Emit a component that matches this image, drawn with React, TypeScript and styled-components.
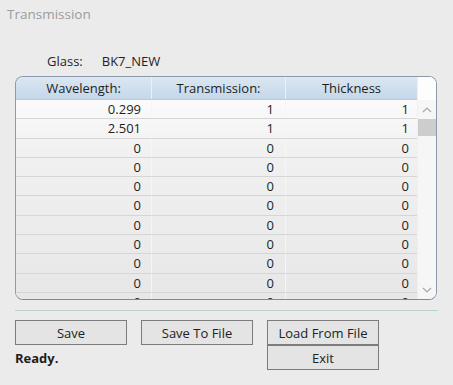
import styled, { createGlobalStyle } from "styled-components";

const GlobalStyle = createGlobalStyle`
  html, body {
    margin: 0;
    padding: 0;
    background: #ebebeb;
  }
  body {
    font-family: "Open Sans", "Noto Sans", sans-serif;
    color: #1e1e1e;
  }
`;

const Window = styled.div`
  width: 453px;
  height: 385px;
  box-sizing: border-box;
  padding: 5px 15px 0 15px;
  background: #ebebeb;
  display: flex;
  flex-direction: column;
`;

const Title = styled.div`
  margin-left: -8px;
  font-size: 13.5px;
  line-height: 18px;
  color: #9c9c9c;
`;

const GlassRow = styled.div`
  display: flex;
  gap: 19px;
  margin: 29px 0 0 32px;
  font-size: 13px;
  line-height: 18px;
`;

const Frame = styled.div`
  margin-top: 6px;
  width: 422px;
  height: 224px;
  box-sizing: border-box;
  border: 1px solid #8c99a8;
  border-bottom-color: #7f8a98;
  border-radius: 8px;
  overflow: hidden;
  display: flex;
  background: #f7f7f7;
`;

const Grid = styled.div`
  flex: 1;
  display: flex;
  flex-direction: column;
  overflow: hidden;
`;

const HeaderRow = styled.div`
  display: grid;
  grid-template-columns: 135px 134px 1fr;
  height: 22px;
  flex-shrink: 0;
  background: linear-gradient(#dbe7f2, #c4d7e9);
  border-bottom: 1px solid #b8c9da;
`;

const HeadCell = styled.div<{ $first?: boolean }>`
  font-size: 13px;
  line-height: 22px;
  text-align: center;
  border-left: ${(p) => (p.$first ? "none" : "1px solid #eaf1f8")};
`;

const Body = styled.div`
  flex: 1;
  overflow: hidden;
  background: linear-gradient(#fbfbfb, #f1f1f1 25%, #e7e7e7);
`;

const Row = styled.div`
  display: grid;
  grid-template-columns: 135px 134px 1fr;
  height: 19.3px;
  box-sizing: border-box;
  border-bottom: 1px solid #d6d6d6;
`;

const Cell = styled.div<{ $pad: number }>`
  font-size: 13px;
  line-height: 18px;
  text-align: right;
  padding-right: ${(p) => p.$pad}px;
  border-left: 1px solid #f6f6f6;
  &:first-child {
    border-left: none;
  }
`;

const Scroll = styled.div`
  width: 18px;
  display: flex;
  flex-direction: column;
  background: #f6f6f6;
  border-left: 1px solid #f0f0f0;
`;

const ScrollCorner = styled.div`
  height: 23px;
  background: #fdfdfd;
`;

const Arrow = styled.div`
  height: 19px;
  display: flex;
  align-items: center;
  justify-content: center;
`;

const Thumb = styled.div`
  height: 17px;
  background: #cdcdcd;
`;

const Track = styled.div`
  flex: 1;
`;

const Divider = styled.div`
  margin-top: 10px;
  width: 423px;
  height: 1px;
  background: #b9d3d3;
`;

const Buttons = styled.div`
  margin-top: 9px;
  display: grid;
  grid-template-columns: 112px 112px 112px;
  column-gap: 14px;
  grid-template-rows: 25px 25px;
`;

const Button = styled.button`
  box-sizing: border-box;
  height: 25px;
  padding: 0;
  border: 1px solid #7c7c7c;
  background: #e4e4e4;
  font-family: "Open Sans", "Noto Sans", sans-serif;
  font-size: 13px;
  color: #222;
`;

const Status = styled.div`
  font-weight: bold;
  font-size: 13px;
  line-height: 25px;
  align-self: center;
  padding-top: 2px;
`;

const rows = [
  ["0.299", "1", "1"],
  ["2.501", "1", "1"],
  ...Array.from({ length: 9 }, () => ["0", "0", "0"]),
];

const Chevron = ({ up }: { up?: boolean }) => (
  <svg width="10" height="6" viewBox="0 0 10 6">
    <path
      d={up ? "M1 5 L5 1 L9 5" : "M1 1 L5 5 L9 1"}
      fill="none"
      stroke="#a8a8a8"
      strokeWidth="1.2"
    />
  </svg>
);

export default function App() {
  return (
    <>
      <GlobalStyle />
      <Window>
        <Title>Transmission</Title>
        <GlassRow>
          <span>Glass:</span>
          <span>BK7_NEW</span>
        </GlassRow>
        <Frame>
          <Grid>
            <HeaderRow>
              <HeadCell $first>Wavelength:</HeadCell>
              <HeadCell>Transmission:</HeadCell>
              <HeadCell>Thickness</HeadCell>
            </HeaderRow>
            <Body>
              {rows.map((r, i) => (
                <Row key={i}>
                  <Cell $pad={10}>{r[0]}</Cell>
                  <Cell $pad={11}>{r[1]}</Cell>
                  <Cell $pad={8}>{r[2]}</Cell>
                </Row>
              ))}
            </Body>
          </Grid>
          <Scroll>
            <ScrollCorner />
            <Arrow>
              <Chevron up />
            </Arrow>
            <Thumb />
            <Track />
            <Arrow>
              <Chevron />
            </Arrow>
          </Scroll>
        </Frame>
        <Divider />
        <Buttons>
          <Button>Save</Button>
          <Button>Save To File</Button>
          <Button>Load From File</Button>
          <Status>Ready.</Status>
          <div />
          <Button>Exit</Button>
        </Buttons>
      </Window>
    </>
  );
}
